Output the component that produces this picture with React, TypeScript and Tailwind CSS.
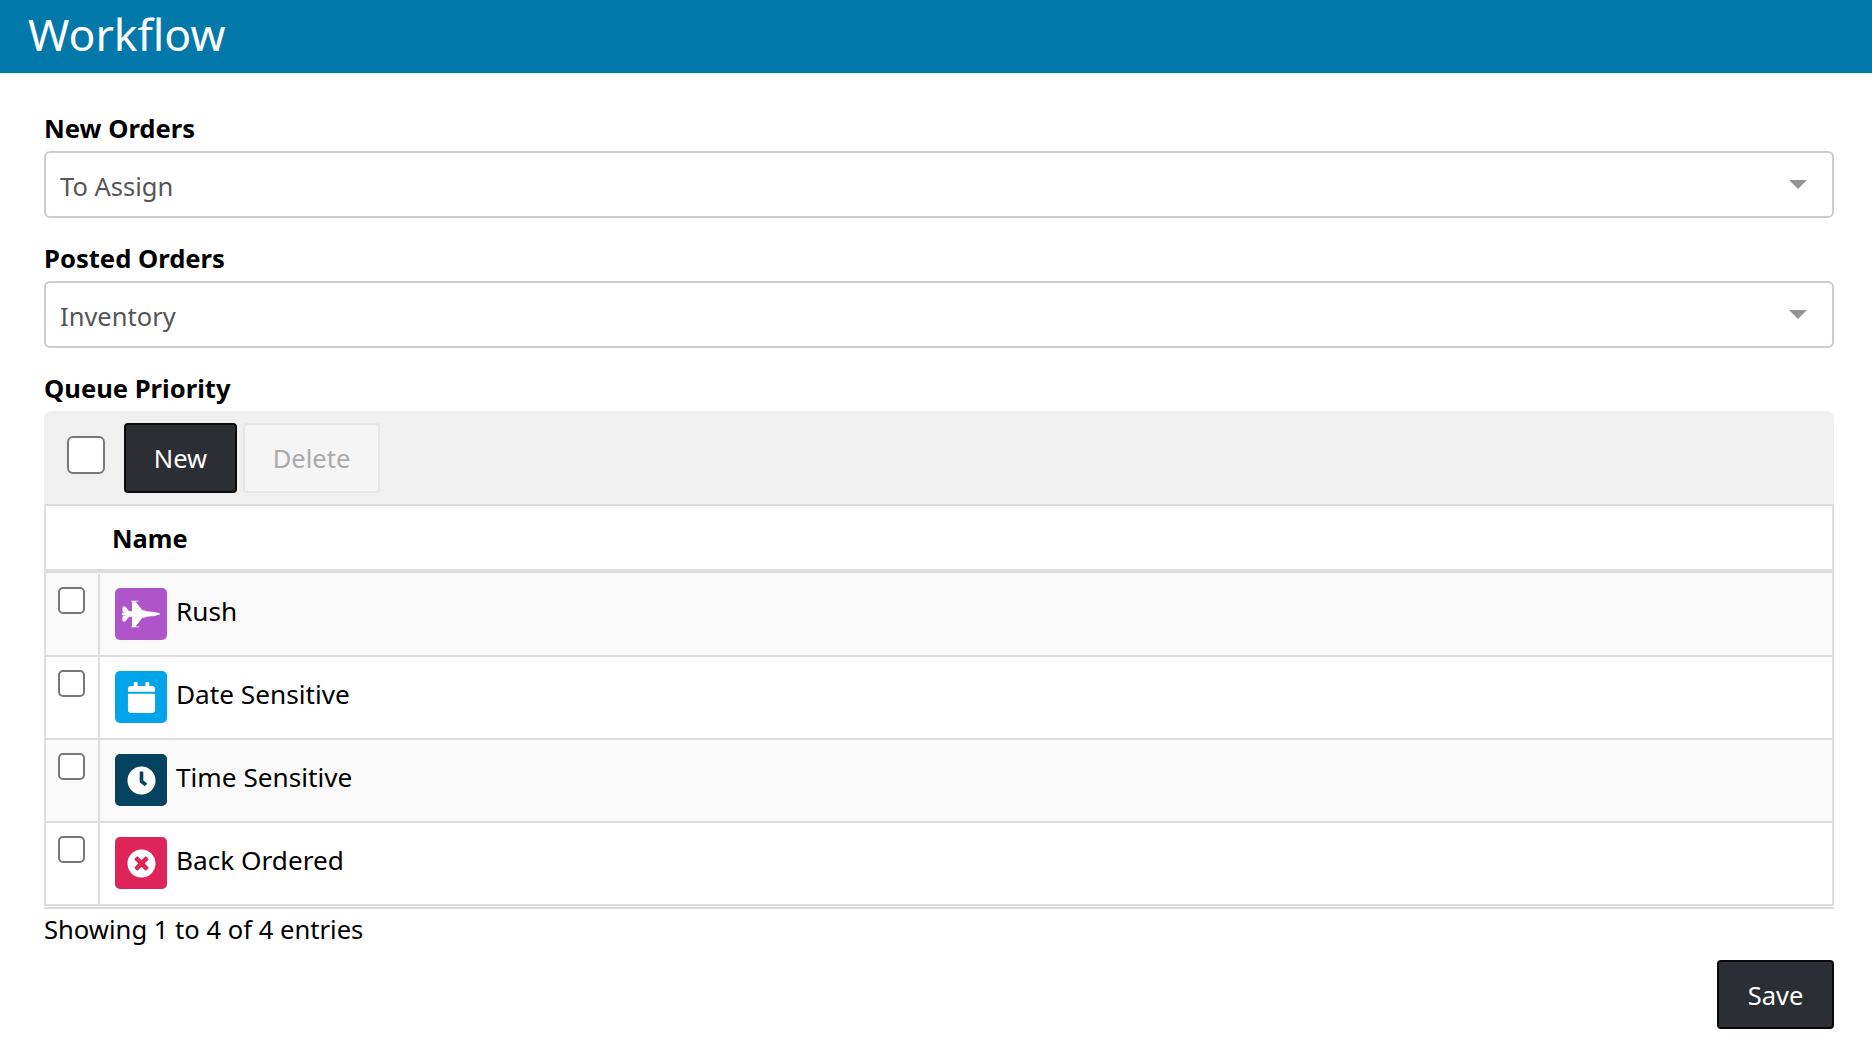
import { FaFighterJet, FaCalendar, FaClock, FaTimesCircle } from "react-icons/fa";
import type { ReactNode } from "react";

const rows: { name: string; bg: string; height: string; stripe: boolean; icon: ReactNode }[] = [
  { name: "Rush", bg: "bg-[#ad55c9]", height: "h-[84px] pt-px", stripe: true, icon: <FaFighterJet className="text-[38px] text-white" /> },
  { name: "Date Sensitive", bg: "bg-[#00a4e8]", height: "h-[83px]", stripe: false, icon: <FaCalendar className="text-[31px] text-white" /> },
  { name: "Time Sensitive", bg: "bg-[#05425f]", height: "h-[83px]", stripe: true, icon: <FaClock className="text-[29px] text-white" /> },
  { name: "Back Ordered", bg: "bg-[#de2458]", height: "h-[83px]", stripe: false, icon: <FaTimesCircle className="text-[29px] text-white" /> },
];

function Select({ value }: { value: string }) {
  return (
    <div className="flex h-[67px] items-center justify-between rounded-md border-2 border-[#cccccc] bg-white pl-[14px] pr-[25px]">
      <span className="pt-[4px] text-[25.5px] text-[#555555]">{value}</span>
      <span className="h-0 w-0 border-x-[9px] border-t-[9px] border-x-transparent border-t-[#949494]" />
    </div>
  );
}

export default function App() {
  return (
    <div className="min-h-[1062px] bg-white font-['Noto_Sans','Open_Sans',sans-serif] text-black">
      <div className="flex h-[73px] items-center bg-[#0278ab] pb-[5px] pl-[28px] shadow-[0_2px_0_#f3f3f3]">
        <h1 className="text-[44.5px] leading-none text-white">Workflow</h1>
      </div>

      <div className="pl-[44px] pr-[38px] pt-[38px]">
        <div className="mb-[5px] h-[35px] text-[25.6px] leading-[36px] font-bold">New Orders</div>
        <Select value="To Assign" />
        <div className="mt-[23px] mb-[5px] h-[35px] text-[25.6px] leading-[36px] font-bold">Posted Orders</div>
        <Select value="Inventory" />
        <div className="mt-[23px] mb-[5px] h-[35px] text-[25.6px] leading-[35px] font-bold">Queue Priority</div>

        <div className="flex h-[93px] items-start rounded-t-lg bg-[#f0f0f0] pl-[23px] pt-[12px]">
          <span className="mt-[13px] h-[38px] w-[38px] rounded-md border-2 border-[#777777] bg-white" />
          <button className="ml-[19px] h-[70px] w-[113px] rounded border-2 border-[#0a0a0a] bg-[#2b2f33] text-[25.5px] text-white">
            New
          </button>
          <button className="ml-[6px] h-[70px] w-[137px] rounded border-2 border-[#e6e6e6] bg-[#f5f5f5] text-[25.5px] text-[#aaaaaa]">
            Delete
          </button>
        </div>

        <div className="border-x-2 border-t-2 border-[#dddddd]">
          <div className="flex h-[67px] items-center border-b-4 border-[#dddddd] bg-white pl-[66px] pt-[2px] text-[25.3px] font-bold">
            Name
          </div>
          {rows.map((row) => (
            <div
              key={row.name}
              className={`flex border-b-2 border-[#dddddd] ${row.height} ${row.stripe ? "bg-[#fafafa]" : "bg-white"}`}
            >
              <div className="w-[54px] border-r-2 border-[#dddddd] pl-[12px] pt-[13px]">
                <span className="block h-[27px] w-[27px] rounded-[5px] border-2 border-[#777777] bg-white" />
              </div>
              <div className="flex items-start pl-[15px] pt-[14px]">
                <span className={`flex h-[52px] w-[52px] items-center justify-center rounded-[5px] ${row.bg}`}>
                  {row.icon}
                </span>
                <span className="ml-[9px] text-[26.2px] leading-[46px]">{row.name}</span>
              </div>
            </div>
          ))}
        </div>

        <div className="mt-[1px] border-t-2 border-[#dddddd] pt-[1px] text-[25.6px] leading-[40px]">
          Showing 1 to 4 of 4 entries
        </div>

        <div className="mt-[10px] flex justify-end">
          <button className="h-[69px] w-[117px] rounded border-2 border-[#0a0a0a] bg-[#2b2f33] pt-px text-[25.5px] text-white">
            Save
          </button>
        </div>
      </div>
    </div>
  );
}
